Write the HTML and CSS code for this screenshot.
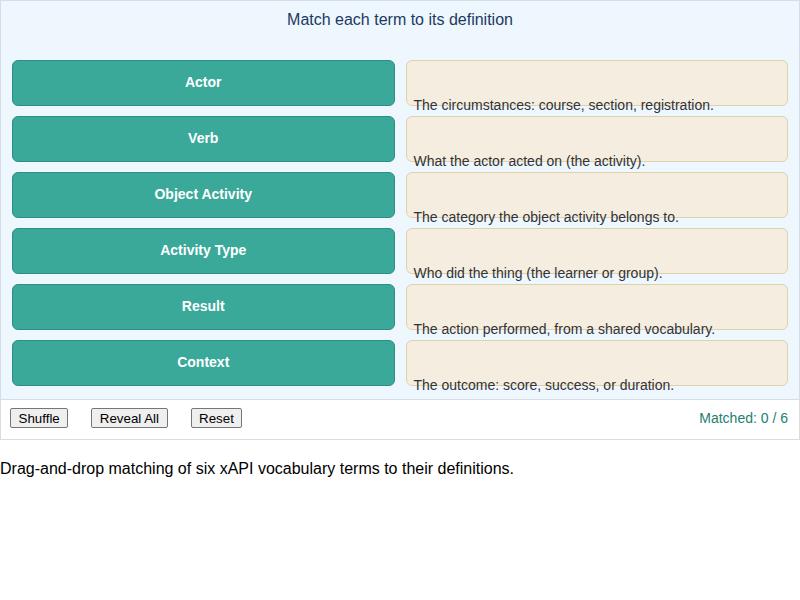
FILE: index.html
```html
<!DOCTYPE html>
<html lang="en">
<head>
  <meta charset="UTF-8" />
  <title>xAPI Matching</title>
  <link rel="stylesheet" href="styles.css">
</head>
<body>
  <!-- Matching board -->
  <div class="stage">
    <h1 class="title">Match each term to its definition</h1>
    <div class="board">
      <div class="term">Actor</div>
      <div class="slot"><span>The circumstances: course, section, registration.</span></div>
      <div class="term">Verb</div>
      <div class="slot"><span>What the actor acted on (the activity).</span></div>
      <div class="term">Object Activity</div>
      <div class="slot"><span>The category the object activity belongs to.</span></div>
      <div class="term">Activity Type</div>
      <div class="slot"><span>Who did the thing (the learner or group).</span></div>
      <div class="term">Result</div>
      <div class="slot"><span>The action performed, from a shared vocabulary.</span></div>
      <div class="term">Context</div>
      <div class="slot"><span>The outcome: score, success, or duration.</span></div>
    </div>
  </div>

  <!-- Controls -->
  <div class="controls">
    <div class="buttons">
      <button>Shuffle</button>
      <button>Reveal All</button>
      <button>Reset</button>
    </div>
    <span class="score">Matched: 0 / 6</span>
  </div>

  <p class="caption">Drag-and-drop matching of six xAPI vocabulary terms to their definitions.</p>
</body>
</html>
```

FILE: styles.css
```css
body {
  margin: 0;
  font-family: 'Liberation Sans', Arial, sans-serif;
  color: #000;
  background: #fff;
}

/* Blue board area */
.stage {
  background-color: #eef6fe;
  border: 1px solid #d5dde6;
  padding: 11px 11px 13px 11px;
  height: 400px;
  box-sizing: border-box;
}

.title {
  margin: 0 0 32px 0;
  font-size: 16px;
  line-height: 16px;
  font-weight: normal;
  text-align: center;
  color: #1c3a5e;
}

.board {
  display: grid;
  grid-template-columns: 1fr 1fr;
  column-gap: 11px;
  row-gap: 10px;
}

.term {
  height: 46px;
  box-sizing: border-box;
  background-color: #3aa99a;
  border: 1px solid #2e8e81;
  border-radius: 6px;
  color: #fff;
  font-weight: bold;
  font-size: 14px;
  display: flex;
  align-items: center;
  justify-content: center;
  padding-bottom: 2px;
}

/* Definition slots: text sits on the bottom edge */
.slot {
  height: 46px;
  box-sizing: border-box;
  background-color: #f5eee0;
  border: 1px solid #ded2ab;
  border-radius: 6px;
  padding: 36px 7px 0 7px;
  font-size: 14px;
  line-height: 16px;
  color: #333;
  white-space: nowrap;
}

.controls {
  display: flex;
  justify-content: space-between;
  align-items: center;
  height: 40px;
  box-sizing: border-box;
  border: 1px solid #dcdcdc;
  border-top: none;
  padding: 0 11px 3px 9px;
}

.buttons {
  display: flex;
  gap: 23px;
}

button {
  font-family: 'Liberation Sans', Arial, sans-serif;
  font-size: 13.333px;
  height: 20px;
  padding: 0 7.5px;
  background-color: #efefef;
  border: 1px solid #767676;
  border-radius: 2px;
  color: #000;
}

.score {
  font-size: 14px;
  color: #23806f;
}

.caption {
  margin: 20px 0 0 0;
  font-size: 16px;
}
```
